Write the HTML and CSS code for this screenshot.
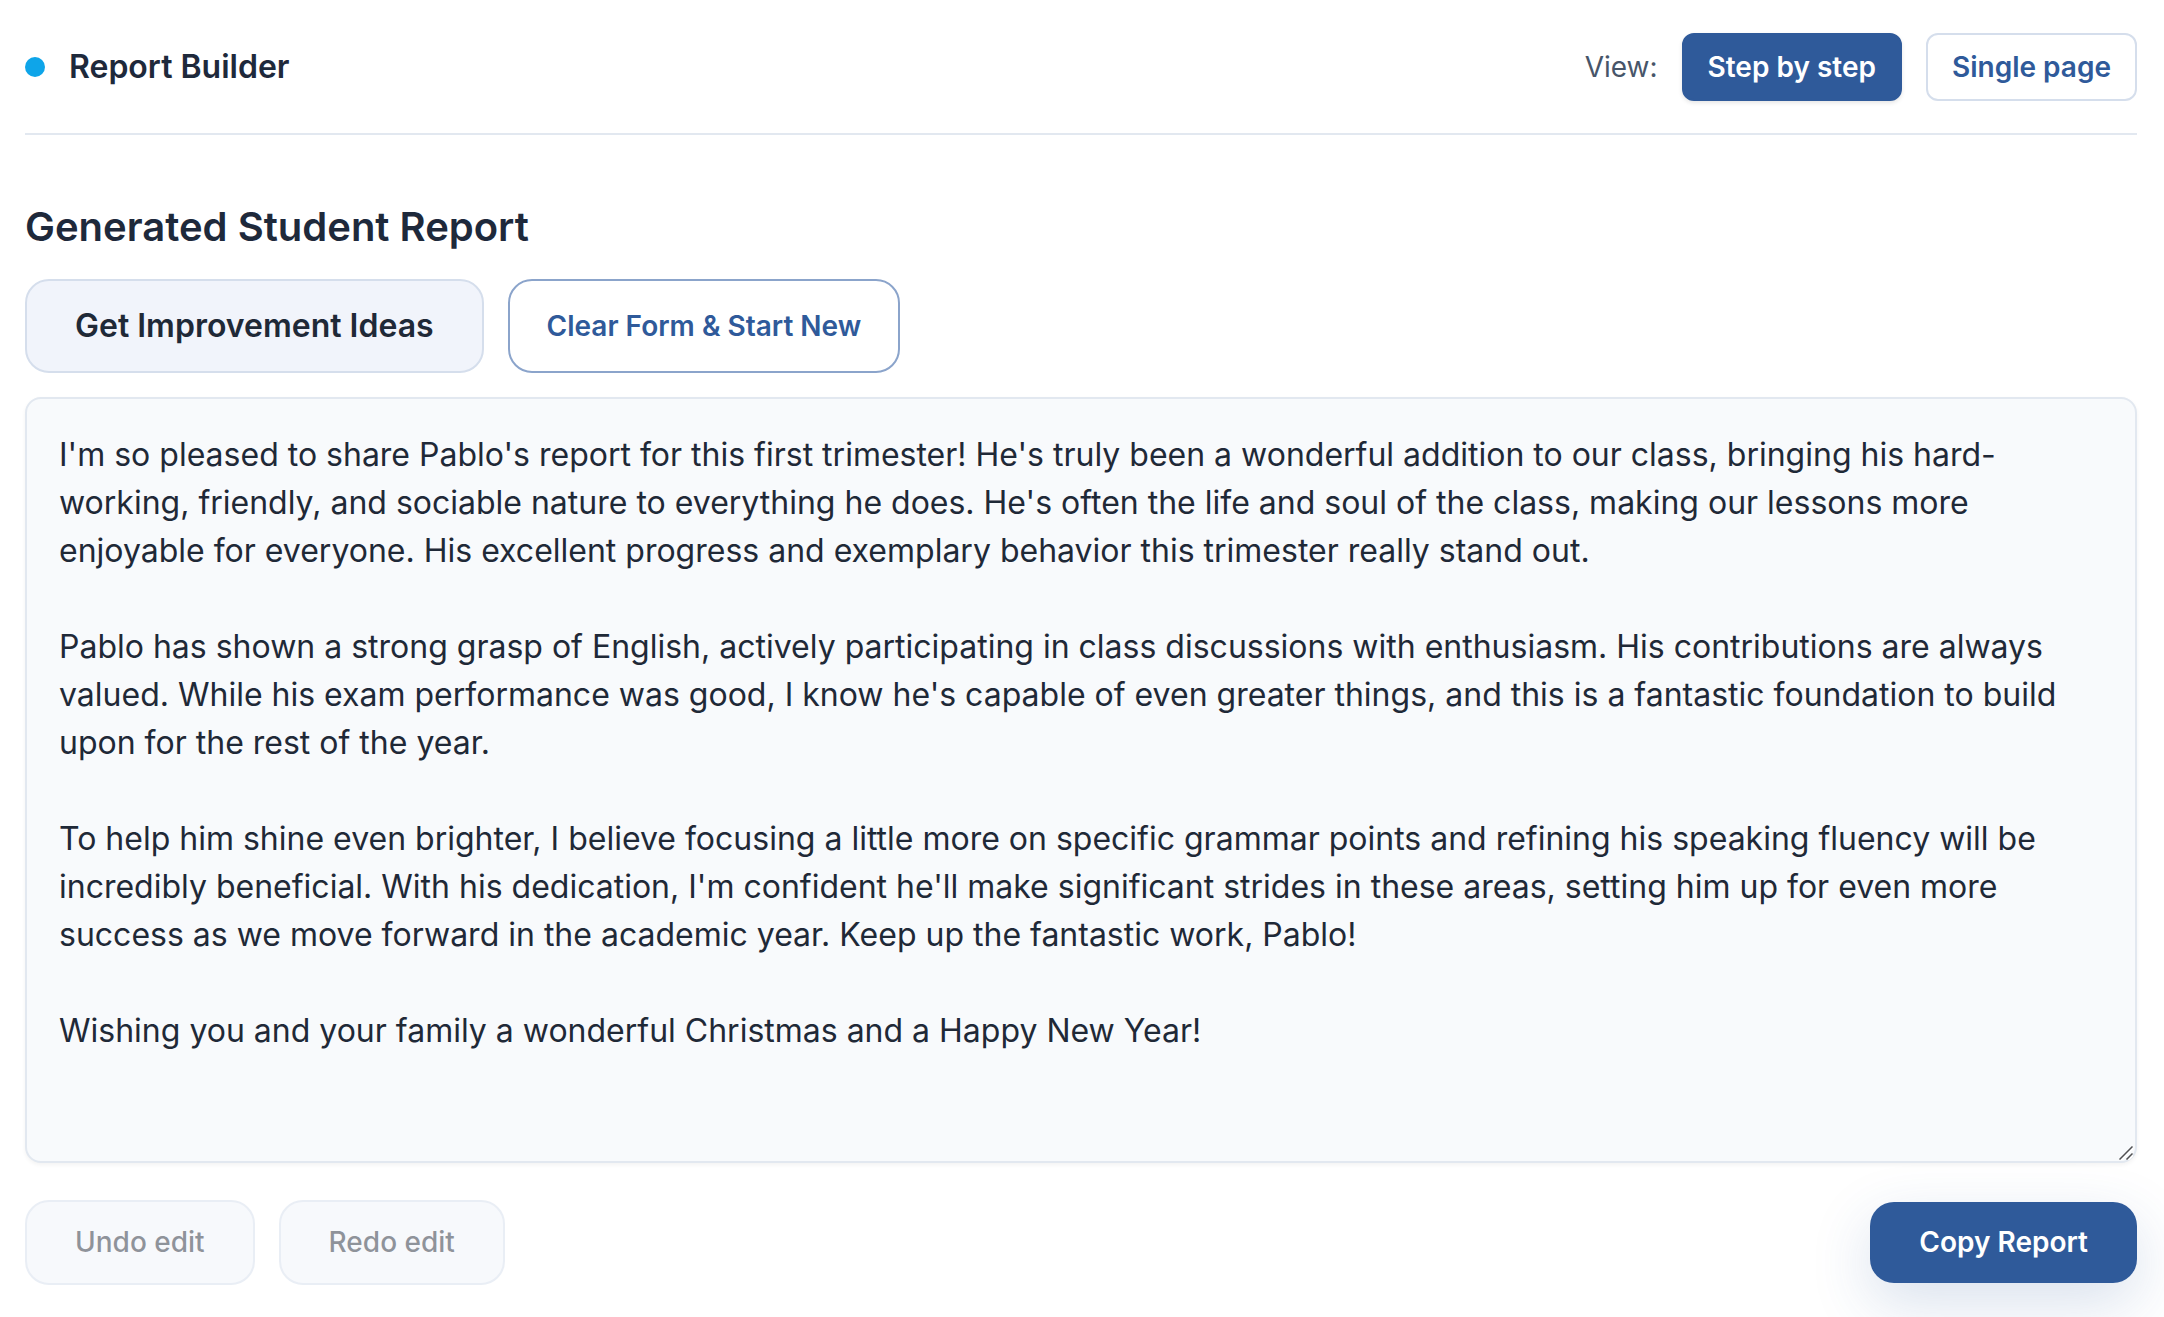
FILE: index.html
```html
<!DOCTYPE html>
<html lang="en">
<head>
<meta charset="utf-8">
<title>Report Builder</title>
<link rel="stylesheet" href="styles.css">
</head>
<body>
<div class="page">
  <header class="topbar">
    <div class="brand"><span class="brand-dot"></span><span>Report Builder</span></div>
    <div class="view-switch" role="group" aria-labelledby="view-label">
      <span class="view-label" id="view-label">View:</span>
      <button type="button" class="tab tab-active" aria-pressed="true">Step by step</button>
      <button type="button" class="tab" aria-pressed="false">Single page</button>
    </div>
  </header>
  <main class="report">
    <h2 class="report-title"><label for="report">Generated Student Report</label></h2>
    <div class="actions">
      <button type="button" class="btn btn-soft btn-large">Get Improvement Ideas</button>
      <button type="button" class="btn btn-outline">Clear Form &amp; Start New</button>
    </div>
    <div class="report-field">
      <textarea class="report-text" id="report" rows="14" spellcheck="false">I'm so pleased to share Pablo's report for this first trimester! He's truly been a wonderful addition to our class, bringing his hard-working, friendly, and sociable nature to everything he does. He's often the life and soul of the class, making our lessons more enjoyable for everyone. His excellent progress and exemplary behavior this trimester really stand out.

Pablo has shown a strong grasp of English, actively participating in class discussions with enthusiasm. His contributions are always valued. While his exam performance was good, I know he's capable of even greater things, and this is a fantastic foundation to build upon for the rest of the year.

To help him shine even brighter, I believe focusing a little more on specific grammar points and refining his speaking fluency will be incredibly beneficial. With his dedication, I'm confident he'll make significant strides in these areas, setting him up for even more success as we move forward in the academic year. Keep up the fantastic work, Pablo!

Wishing you and your family a wonderful Christmas and a Happy New Year!</textarea>
      <svg class="grip" viewBox="0 0 14 14" aria-hidden="true">
        <path class="grip-halo" d="M2.2 14.2 14.2 2.2M9.2 14.2l5-5"/>
        <path class="grip-line" d="M.5 13.5l13-13M7.5 13.5l6-6"/>
      </svg>
    </div>
    <div class="footer">
      <div class="history">
        <button type="button" class="btn btn-soft" disabled>Undo edit</button>
        <button type="button" class="btn btn-soft" disabled>Redo edit</button>
      </div>
      <button type="button" class="btn btn-primary">Copy Report</button>
    </div>
  </main>
</div>
</body>
</html>
```
FILE: styles.css
```css
* {
  box-sizing: border-box;
}

body {
  margin: 0;
  background: #fff;
  color: #1e293b;
  font: 400 32px/48px Inter, "Liberation Sans", sans-serif;
}

button,
textarea {
  font-family: inherit;
}

.page {
  min-height: 100vh;
  padding: 33px 27px 32px 25px;
  overflow: hidden;
}

.topbar {
  display: flex;
  align-items: center;
  justify-content: space-between;
  padding-bottom: 32px;
  border-bottom: 2px solid #e2e8f0;
}

.brand {
  display: flex;
  align-items: center;
  gap: 24px;
  font-weight: 600;
}

.brand-dot {
  width: 20px;
  height: 20px;
  border-radius: 50%;
  background: #0ea5e9;
}

.view-switch {
  display: flex;
  align-items: center;
  gap: 24px;
}

.view-label {
  color: #475569;
  font-size: 28px;
  line-height: 40px;
}

.tab {
  padding: 12px 24px;
  border: 2px solid #d5deec;
  border-radius: 12px;
  background: #fff;
  color: #2f5a9a;
  font-size: 28px;
  font-weight: 600;
  line-height: 40px;
}

.tab-active {
  border-color: #2f5a9a;
  background: #2f5a9a;
  color: #fff;
  box-shadow: 0 2px 4px rgba(0, 0, 0, 0.1);
}

.report {
  padding-top: 64px;
}

.report-title {
  margin: 0 0 24px;
  font-size: 40px;
  font-weight: 600;
  line-height: 56px;
}

.actions {
  display: flex;
  gap: 24px;
  margin-bottom: 24px;
}

.btn {
  padding: 20px 48px;
  border: 2px solid transparent;
  border-radius: 24px;
  font-size: 28px;
  font-weight: 600;
  line-height: 41px;
}

.btn-soft {
  border-color: #d5deec;
  background: #f1f4fb;
  color: #1f2937;
  font-weight: 500;
}

.btn-soft:disabled {
  opacity: 0.5;
}

.btn-large {
  font-size: 32px;
  font-weight: 600;
  line-height: 50px;
}

.btn-outline {
  padding: 20px 37px;
  border-color: #8ba4cb;
  background: #fff;
  color: #2f5a9a;
}

.btn-primary {
  padding: 20px 49px;
  border: 0;
  background: #2f5a9a;
  color: #fff;
  box-shadow: 0 20px 60px rgba(47, 90, 154, 0.18);
}

.report-field {
  position: relative;
}

.report-text {
  display: block;
  width: 100%;
  min-height: 766px;
  padding: 32px;
  border: 2px solid #e2e8f0;
  border-radius: 16px;
  background: #f8fafc;
  color: #1f2937;
  font-size: 32px;
  line-height: 48px;
  box-shadow: 0 2px 4px rgba(0, 0, 0, 0.05);
  resize: vertical;
}

.report-text::-webkit-resizer {
  background: transparent;
}

.grip {
  position: absolute;
  right: 4px;
  bottom: 3px;
  width: 14px;
  height: 14px;
  fill: none;
  pointer-events: none;
}

.grip-halo {
  stroke: #fff;
  stroke-width: 1.5;
}

.grip-line {
  stroke: #505052;
  stroke-width: 1.5;
}

.footer {
  display: flex;
  align-items: center;
  justify-content: space-between;
  margin-top: 37px;
}

.history {
  display: flex;
  gap: 24px;
}
```
